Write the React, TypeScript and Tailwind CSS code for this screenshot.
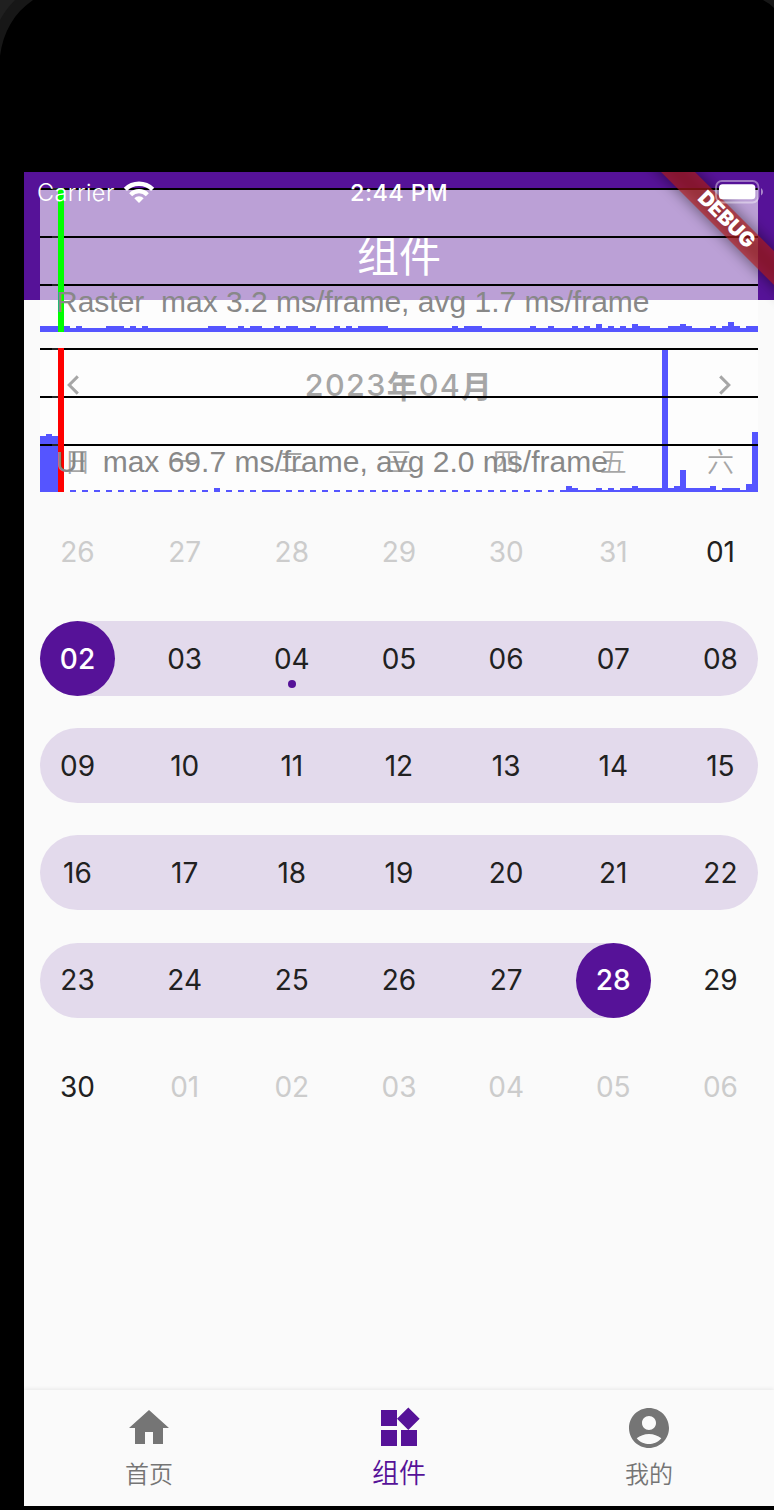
import React from 'react';

type Bar = [x: number, width: number, height: number];

const SANS = "font-[Inter,'Noto_Sans_CJK_SC',sans-serif]";
const CJK = "font-['Noto_Sans_CJK_SC',sans-serif]";

/* Frame timings, in pixels from the left edge of the graph. */
const rasterBars: Bar[] = [
  [0, 718, 4], [0, 30, 6], [36, 6, 6], [66, 18, 6], [90, 6, 6], [102, 6, 6],
  [168, 18, 6], [198, 6, 6], [210, 12, 6], [234, 6, 6], [246, 12, 6], [270, 6, 6],
  [294, 6, 6], [306, 6, 6], [318, 30, 6], [412, 6, 6], [424, 18, 6], [490, 6, 6],
  [508, 6, 6], [532, 6, 6], [544, 6, 6], [556, 6, 8], [568, 6, 6], [580, 6, 6],
  [592, 6, 8], [598, 12, 6], [628, 24, 6], [640, 6, 8], [670, 6, 6], [682, 18, 6],
  [688, 6, 10], [706, 12, 6],
];

const dashes: Bar[] = [5, 7, 9, 11, 13, 15, 17, 19, 20, 21, 23, 25, 27, 29, 31, 33, 35, 37, 38, 39,
  41, 43, 45, 47, 49, 51, 53, 55, 57, 59, 61, 63, 65, 67, 69, 71, 73, 75, 77, 79, 81, 83, 85,
].map((k) => [Math.round((k * 5.983) / 2) * 2, 6, 2]);

const uiBars: Bar[] = [
  [0, 18, 56], [6, 6, 58], ...dashes, [174, 6, 4],
  [520, 198, 2], [526, 6, 6], [532, 6, 4], [556, 6, 4], [568, 6, 4], [580, 42, 4],
  [592, 6, 6], [622, 6, 142], [628, 48, 4], [634, 6, 6], [640, 6, 22], [670, 6, 6],
  [682, 18, 4], [706, 6, 8], [712, 6, 60],
];

function Graph({ bars, marker, label }: { bars: Bar[]; marker: string; label: string }) {
  return (
    <div className="relative h-[144px] w-[718px] bg-white/60">
      <svg width="718" height="144" shapeRendering="crispEdges" className="block">
        {bars.map(([x, w, h], i) => (
          <rect key={i} x={x} y={144 - h} width={w} height={h} fill="#5555ff" />
        ))}
        {[0, 48, 96].map((y) => (
          <g key={y}>
            <rect y={y} width="718" height="2" fill="#000" />
            <rect x="12" y={y} width="6" height="2" fill="#262626" />
          </g>
        ))}
        <rect x="18" width="6" height="144" fill={marker} />
      </svg>
      <div className="absolute left-[16px] top-[97px] whitespace-pre font-['Liberation_Sans',sans-serif] text-[30px] leading-[34px] text-[#888888]">
        {label}
      </div>
    </div>
  );
}

type Day = { n: string; muted?: boolean; end?: boolean; dot?: boolean };
type Week = { days: Day[]; range?: 'full' | 'partial' };

const week = (list: string, range?: Week['range'], patch: Record<number, Partial<Day>> = {}): Week => ({
  range,
  days: list.split(' ').map((n, i) => ({ n, ...patch[i] })),
});
const m = { muted: true };

const weeks: Week[] = [
  week('26 27 28 29 30 31 01', undefined, { 0: m, 1: m, 2: m, 3: m, 4: m, 5: m }),
  week('02 03 04 05 06 07 08', 'full', { 0: { end: true }, 2: { dot: true } }),
  week('09 10 11 12 13 14 15', 'full'),
  week('16 17 18 19 20 21 22', 'full'),
  week('23 24 25 26 27 28 29', 'partial', { 5: { end: true } }),
  week('30 01 02 03 04 05 06', undefined, { 1: m, 2: m, 3: m, 4: m, 5: m, 6: m }),
];

function DayCell({ day }: { day: Day }) {
  const tone = day.end
    ? 'bg-[#561298] text-white font-[450]'
    : day.muted
      ? 'text-[#cccccc]'
      : 'text-[#212121]';
  return (
    <div className={`relative flex h-[75px] w-[75px] items-center justify-center rounded-full text-[28px] ${tone}`}>
      {day.n}
      {day.dot && <span className="absolute bottom-[8px] left-[34px] h-2 w-2 rounded-full bg-[#561298]" />}
    </div>
  );
}

function WeekRow({ data }: { data: Week }) {
  return (
    <div className="grid grid-cols-1">
      {data.range && (
        <div
          className={`col-start-1 row-start-1 h-[75px] rounded-full bg-[#e3daec] ${data.range === 'full' ? 'w-full' : 'w-[611px]'}`}
        />
      )}
      <div className="col-start-1 row-start-1 flex justify-between">
        {data.days.map((d, i) => (
          <DayCell key={i} day={d} />
        ))}
      </div>
    </div>
  );
}

function Chevron({ d }: { d: string }) {
  return (
    <svg width="24" height="24" viewBox="0 0 24 24" fill="none" stroke="#212121" strokeWidth="3">
      <path d={d} />
    </svg>
  );
}

function StatusBar() {
  return (
    <div className={`absolute left-0 top-0 h-10 w-[750px] text-white ${SANS}`}>
      <div className="grid h-10 grid-cols-[326px_98px_1fr] items-center pr-[9px]">
        <div className="flex items-center pl-[13px]">
          <span className="w-[86px] pt-[2px] text-[23.5px] font-light tracking-[0.4px]">Carrier</span>
          <svg width="32" height="24" viewBox="0 0 32 24" fill="none" stroke="#fff">
            <path d="M2.35 9.35a19.3 19.3 0 0 1 27.3 0" strokeWidth="4.4" />
            <path d="M7.65 14.65a11.8 11.8 0 0 1 16.7 0" strokeWidth="4.2" />
            <path d="M16 23l-4.7-4.7a6.65 6.65 0 0 1 9.4 0z" fill="#fff" stroke="none" />
          </svg>
        </div>
        <span className="whitespace-nowrap pt-[2px] text-center text-[23.5px] font-[550] tracking-[0.4px]">2:44 PM</span>
        <svg className="justify-self-end" width="50" height="24" viewBox="0 0 50 24">
          <rect x="1" y="1" width="42.5" height="21.5" rx="6" fill="none" stroke="#fff" strokeOpacity=".42" strokeWidth="1.8" />
          <rect x="4" y="4.2" width="36.3" height="15" rx="3.5" fill="#fff" />
          <path d="M46 8.2c2.6 1.1 2.6 6 0 7.2z" fill="#fff" fillOpacity=".5" />
        </svg>
      </div>
    </div>
  );
}

function DebugBanner() {
  return (
    <div className="absolute inset-0 overflow-hidden">
      <div className="absolute left-[551.5px] top-[35.5px] h-6 w-[300px] rotate-45">
        <div className="absolute inset-0 bg-black/50 blur-[7.5px]" />
        <div className="absolute inset-0 flex items-center justify-center bg-[#b71c1c]/63 pb-px font-[Inter,sans-serif] text-[20.4px] font-black leading-none text-white">
          DEBUG
        </div>
      </div>
    </div>
  );
}

const tabs = [
  { label: '首页', d: 'M10 20v-6h4v6h5v-8h3L12 3 2 12h3v8z' },
  {
    label: '组件',
    active: true,
    d: 'M13 13v8h8v-8h-8zM3 21h8v-8H3v8zM3 3v8h8V3H3zm13.66-1.31L11 7.34 16.66 13l5.66-5.66-5.66-5.65z',
  },
  {
    label: '我的',
    d: 'M12 2C6.48 2 2 6.48 2 12s4.48 10 10 10 10-4.48 10-10S17.52 2 12 2zm0 4c1.93 0 3.5 1.57 3.5 3.5S13.93 13 12 13s-3.5-1.57-3.5-3.5S10.07 6 12 6zm0 14c-2.03 0-4.43-.82-6.14-2.88C7.55 15.8 9.68 15 12 15s4.45.8 6.14 2.12C16.43 19.18 14.03 20 12 20z',
  },
];

export default function App() {
  return (
    <div className="relative h-[1510px] w-[774px] overflow-hidden bg-black pl-6 pt-[172px]">
      <svg className="absolute left-0 top-0" width="774" height="60">
        <path d="M0 0H33C14 13 3 32 0 56Z" fill="#171717" />
        <path d="M0 0H15Q6 9 0 20Z" fill="#202020" />
        <path d="M763 0H774V8Q769 3 763 0Z" fill="#171717" />
      </svg>

      <div className={`relative flex h-[1334px] w-[750px] flex-col overflow-hidden bg-[#fafafa] ${SANS}`}>
        <header className="flex h-[128px] shrink-0 items-end justify-center bg-[#561298] pb-[16px]">
          <h1 className={`text-[42px] font-normal leading-[60px] text-white ${CJK}`}>组件</h1>
        </header>

        <main className="flex grow flex-col px-4 pt-[61px]">
          <div className="flex h-12 items-center justify-between px-[20.5px]">
            <Chevron d="M16.8 3.4 8.2 12l8.6 8.6" />
            <div className="flex items-center text-[30.5px] font-medium tracking-[1.4px] text-[#212121]">
              2023<span className={`font-bold leading-none ${CJK}`}>年</span>04<span className={`font-bold leading-none ${CJK}`}>月</span>
            </div>
            <Chevron d="M7.2 3.4 15.8 12l-8.6 8.6" />
          </div>
          <div className={`mt-[34px] flex h-9 items-center justify-between text-[27px] font-[350] text-[#212121] ${CJK}`}>
            {['日', '一', '二', '三', '四', '五', '六'].map((d) => (
              <div key={d} className="w-[75px] text-center">{d}</div>
            ))}
          </div>
          <div className="mt-[35px] flex flex-col gap-[32.17px]">
            {weeks.map((w, i) => (
              <WeekRow key={i} data={w} />
            ))}
          </div>
        </main>

        <nav className="grid h-[116px] shrink-0 grid-cols-3 bg-[#fafafa] shadow-[0_-1px_4px_rgba(0,0,0,0.08)]">
          {tabs.map((t) => (
            <div
              key={t.label}
              className={`flex flex-col items-center pt-[14px] ${CJK} ${t.active ? 'text-[#561298]' : 'text-[#757575]'}`}
            >
              <svg width="48" height="48" viewBox="0 0 24 24" fill="currentColor">
                <path d={t.d} />
              </svg>
              <span className={t.active ? 'text-[27px] font-[350] leading-10' : 'pt-px text-[24px] font-[350] leading-10'}>
                {t.label}
              </span>
            </div>
          ))}
        </nav>

        <div className="absolute left-4 top-4 flex flex-col gap-4">
          <Graph bars={rasterBars} marker="#00ff00" label="Raster  max 3.2 ms/frame, avg 1.7 ms/frame" />
          <Graph bars={uiBars} marker="#ff0000" label="UI  max 69.7 ms/frame, avg 2.0 ms/frame" />
        </div>
        <DebugBanner />
        <StatusBar />
      </div>
    </div>
  );
}
